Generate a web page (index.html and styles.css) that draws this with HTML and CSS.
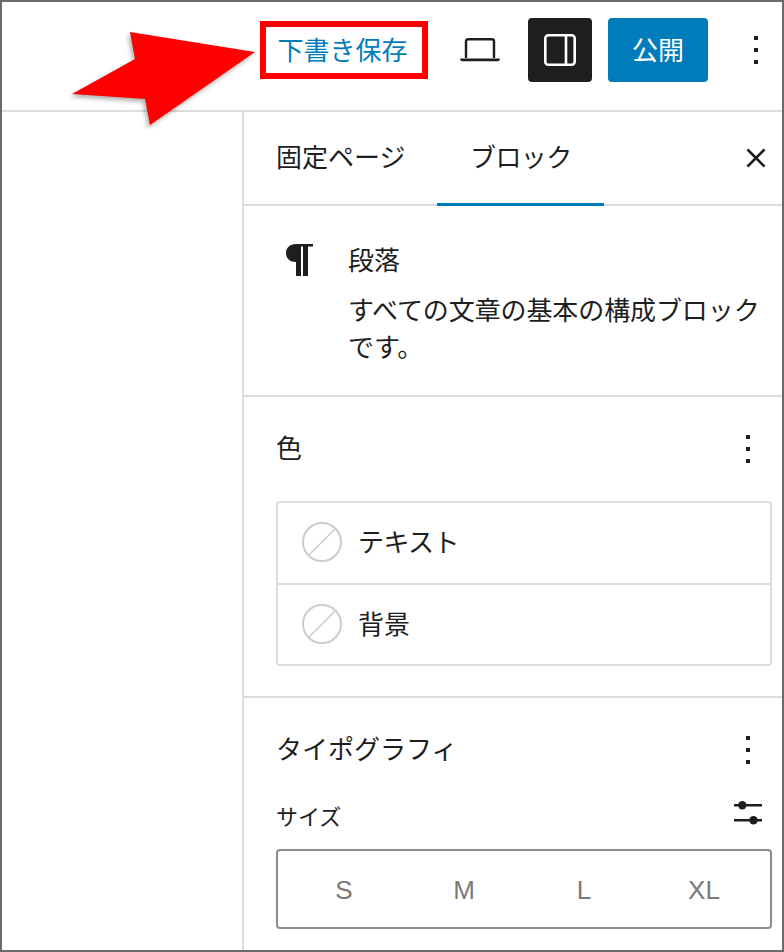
FILE: index.html
```html
<!DOCTYPE html>
<html lang="ja">
<head>
<meta charset="utf-8">
<title>段落</title>
<link rel="stylesheet" href="styles.css">
</head>
<body>
<div class="frame">
  <header class="topbar">
    <button class="save"><span class="btn-label">下書き保存</span></button>
    <button class="icon-btn laptop" aria-label="プレビュー">
      <svg width="40" height="24" viewBox="0 0 40 24"><path d="M6 20V3.200C6 2 7 1.200 8.200 1.200h23.600C33 1.200 34 2 34 3.200V20" fill="none" stroke="#1e1e1e" stroke-width="2.400"/><path d="M0 20.500h40c0 1.800-1 2.800-2.500 2.800h-35C1 23.300 0 22.300 0 20.500z" fill="#1e1e1e"/></svg>
    </button>
    <button class="settings" aria-label="設定">
      <svg width="32" height="32" viewBox="0 0 32 32"><rect x="1.300" y="1.300" width="29.400" height="29.400" rx="3" fill="none" stroke="#fff" stroke-width="2.600"/><path d="M22 2v28" stroke="#fff" stroke-width="2.600"/></svg>
    </button>
    <button class="publish"><span class="btn-label">公開</span></button>
    <button class="dots top-dots" aria-label="オプション"><i></i><i></i><i></i></button>
  </header>
  <div class="main">
    <div class="canvas"></div>
    <aside class="sidebar">
      <nav class="tabs">
        <div class="tab first">固定ページ</div>
        <div class="tab active"><span class="kana">ブロック</span></div>
        <button class="close" aria-label="閉じる">
          <svg width="20" height="20" viewBox="0 0 20 20"><path d="M1.500 1.500l17 17M18.500 1.500l-17 17" stroke="#1e1e1e" stroke-width="2.600" fill="none"/></svg>
        </button>
      </nav>
      <section class="block-card">
        <svg class="pilcrow" width="28" height="34" viewBox="0 0 28 34"><path d="M11 1H28V3.500H23V33H18V3.500H16V33H11V19C4.500 19 1 15 1 10C1 5 4.500 1 11 1Z" fill="#1e1e1e"/></svg>
        <div class="card-text">
          <h2 class="card-title">段落</h2>
          <p class="card-desc">すべての文章の基本の構成ブロックです。</p>
        </div>
      </section>
      <section class="panel color-panel">
        <div class="panel-head">
          <h2 class="panel-title">色</h2>
          <button class="dots" aria-label="色のオプション"><i></i><i></i><i></i></button>
        </div>
        <div class="color-box">
          <div class="color-row">
            <svg class="swatch" width="40" height="40" viewBox="0 0 40 40"><circle cx="20" cy="20" r="19" fill="#fff" stroke="#ccc" stroke-width="2"/><path d="M6.500 33.500l27-27" stroke="#ccc" stroke-width="1.600"/></svg>
            <span class="row-label kana">テキスト</span>
          </div>
          <div class="color-row">
            <svg class="swatch" width="40" height="40" viewBox="0 0 40 40"><circle cx="20" cy="20" r="19" fill="#fff" stroke="#ccc" stroke-width="2"/><path d="M6.500 33.500l27-27" stroke="#ccc" stroke-width="1.600"/></svg>
            <span class="row-label">背景</span>
          </div>
        </div>
      </section>
      <section class="panel type-panel">
        <div class="panel-head">
          <h2 class="panel-title">タイポグラフィ</h2>
          <button class="dots" aria-label="タイポグラフィのオプション"><i></i><i></i><i></i></button>
        </div>
        <div class="size-head">
          <span class="size-label">サイズ</span>
          <svg width="28" height="26" viewBox="0 0 28 26"><path d="M0 5.300h28M0 20.300h28" stroke="#1e1e1e" stroke-width="2.600"/><circle cx="8.300" cy="5.300" r="4.200" fill="#1e1e1e"/><circle cx="19.500" cy="20.300" r="4.200" fill="#1e1e1e"/></svg>
        </div>
        <div class="size-box">
          <span>S</span><span>M</span><span>L</span><span>XL</span>
        </div>
      </section>
    </aside>
  </div>
  <svg class="arrow" width="200" height="110" viewBox="0 0 200 110"><polygon points="60,12 185,32 80,105 75,79 2,74 65,39" fill="#f00"/></svg>
</div>
</body>
</html>
```

FILE: styles.css
```css
* { box-sizing: border-box; }
html, body { margin: 0; padding: 0; background: #fff; }
body {
  font-family: "Noto Sans CJK JP", "Liberation Sans", sans-serif;
  color: #1e1e1e;
  overflow: hidden;
}
button {
  border: 0;
  background: none;
  padding: 0;
  font: inherit;
  color: inherit;
  display: flex;
  align-items: center;
  justify-content: center;
}
h2, p { margin: 0; font-weight: 400; }
.kana { letter-spacing: -0.6px; }
.btn-label { margin-bottom: 4px; }

.frame {
  position: relative;
  width: 784px;
  height: 952px;
  border: 2px solid #6b6b6b;
  display: flex;
  flex-direction: column;
  overflow: hidden;
}

.topbar {
  height: 110px;
  flex: none;
  border-bottom: 2px solid #ddd;
  display: flex;
  align-items: center;
  padding-bottom: 12px;
  padding-left: 258px;
}
.save {
  width: 168px;
  height: 58px;
  border: 6px solid #f00;
  padding-right: 3px;
  color: #007cba;
  font-size: 26px;
}
.laptop { width: 40px; margin-left: 32px; height: 64px; }
.settings {
  width: 64px;
  height: 64px;
  margin-left: 28px;
  background: #1e1e1e;
  border-radius: 4px;
}
.publish {
  width: 100px;
  height: 64px;
  margin-left: 16px;
  background: #007cba;
  color: #fff;
  border-radius: 4px;
  font-size: 26px;
}
.dots {
  width: 4px;
  flex-direction: column;
  gap: 8px;
}
.dots i {
  display: block;
  width: 4px;
  height: 4px;
  background: #1e1e1e;
}
.top-dots { margin-left: 46px; }

.main { flex: 1; display: flex; min-height: 0; }
.canvas { width: 240px; flex: none; }
.sidebar {
  flex: 1;
  border-left: 2px solid #ddd;
  display: flex;
  flex-direction: column;
}

.tabs {
  height: 94px;
  flex: none;
  display: flex;
  align-items: flex-start;
  border-bottom: 2px solid #ddd;
  font-size: 26px;
}
.tab {
  height: 94px;
  flex: none;
  display: flex;
  align-items: center;
  padding: 0 0 8px 32px;
}
.tab.first { width: 193px; }
.tab.active { width: 167px; padding-left: 33px; box-shadow: inset 0 -3px 0 #007cba; }
.close { margin-left: auto; margin-right: 16px; margin-top: 36px; }

.block-card {
  height: 191px;
  flex: none;
  border-bottom: 2px solid #ddd;
  display: flex;
  padding: 34px 11px 0 41px;
}
.pilcrow { flex: none; margin-top: 3px; }
.card-text { margin-left: 35px; }
.card-title { font-size: 26px; line-height: 38px; }
.card-desc { font-size: 26px; line-height: 37px; margin-top: 12px; letter-spacing: -0.1px; }

.panel { border-bottom: 2px solid #ddd; padding: 0 10px 0 32px; flex: none; }
.panel-head {
  height: 40px;
  display: flex;
  align-items: center;
  justify-content: space-between;
  padding-right: 22px;
}
.panel-title { font-size: 26px; line-height: 40px; margin-bottom: 5px; }

.color-panel { height: 301px; padding-top: 32px; }
.color-box {
  margin-top: 32px;
  height: 165px;
  border: 2px solid #ddd;
  border-radius: 4px;
}
.color-row {
  height: 80px;
  display: flex;
  align-items: center;
  padding: 0 0 2px 24px;
  font-size: 26px;
}
.color-row + .color-row { height: 81px; padding-bottom: 1px; border-top: 2px solid #ddd; }
.swatch { flex: none; margin-right: 16px; }
.row-label { margin-bottom: 4px; }

.type-panel { border-bottom: 0; padding-top: 32px; }
.size-head {
  display: flex;
  align-items: center;
  justify-content: space-between;
  height: 40px;
  margin-top: 23px;
  padding-right: 10px;
}
.size-label { font-size: 22px; margin-top: 4px; }
.size-box {
  margin-top: 16px;
  height: 80px;
  border: 2px solid #8c8c8c;
  border-radius: 4px;
  display: grid;
  grid-template-columns: repeat(4, 120px);
  padding: 2px 0 0 6px;
  align-items: center;
  justify-items: center;
  font-family: "Liberation Sans", sans-serif;
  font-size: 26px;
  color: #7a7a7a;
}

.arrow {
  position: absolute;
  left: 68px;
  top: 18px;
  filter: drop-shadow(-2px 3px 2px rgba(0, 0, 0, 0.3));
}
```
